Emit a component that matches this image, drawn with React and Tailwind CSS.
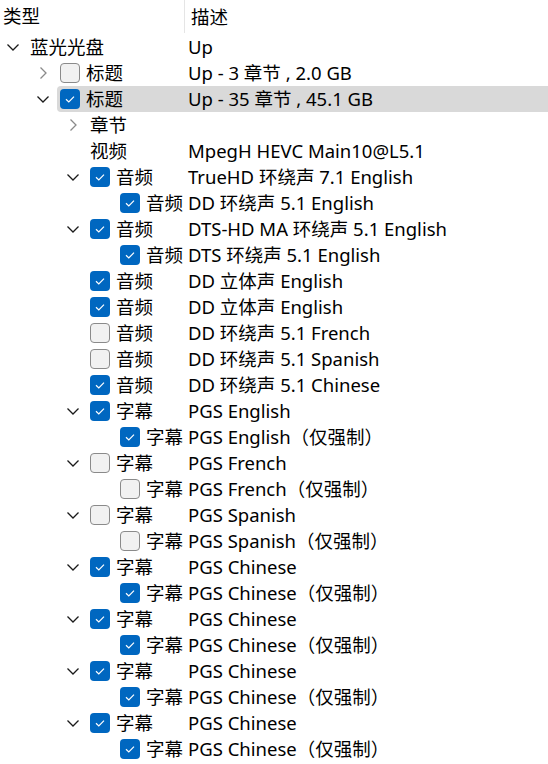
import React from "react";

const rows = [
  { l: 0, ch: "open", cb: null, t: "蓝光光盘", d: "Up" },
  { l: 1, ch: "closed", cb: false, t: "标题", d: "Up - 3 章节 , 2.0 GB" },
  { l: 1, ch: "open", cb: true, t: "标题", d: "Up - 35 章节 , 45.1 GB", sel: true },
  { l: 2, ch: "closed", cb: null, t: "章节", d: "" },
  { l: 2, ch: null, cb: null, t: "视频", d: "MpegH HEVC Main10@L5.1" },
  { l: 2, ch: "open", cb: true, t: "音频", d: "TrueHD 环绕声 7.1 English" },
  { l: 3, ch: null, cb: true, t: "音频", d: "DD 环绕声 5.1 English" },
  { l: 2, ch: "open", cb: true, t: "音频", d: "DTS-HD MA 环绕声 5.1 English" },
  { l: 3, ch: null, cb: true, t: "音频", d: "DTS 环绕声 5.1 English" },
  { l: 2, ch: null, cb: true, t: "音频", d: "DD 立体声 English" },
  { l: 2, ch: null, cb: true, t: "音频", d: "DD 立体声 English" },
  { l: 2, ch: null, cb: false, t: "音频", d: "DD 环绕声 5.1 French" },
  { l: 2, ch: null, cb: false, t: "音频", d: "DD 环绕声 5.1 Spanish" },
  { l: 2, ch: null, cb: true, t: "音频", d: "DD 环绕声 5.1 Chinese" },
  { l: 2, ch: "open", cb: true, t: "字幕", d: "PGS English" },
  { l: 3, ch: null, cb: true, t: "字幕", d: "PGS English（仅强制）" },
  { l: 2, ch: "open", cb: false, t: "字幕", d: "PGS French" },
  { l: 3, ch: null, cb: false, t: "字幕", d: "PGS French（仅强制）" },
  { l: 2, ch: "open", cb: false, t: "字幕", d: "PGS Spanish" },
  { l: 3, ch: null, cb: false, t: "字幕", d: "PGS Spanish（仅强制）" },
  { l: 2, ch: "open", cb: true, t: "字幕", d: "PGS Chinese" },
  { l: 3, ch: null, cb: true, t: "字幕", d: "PGS Chinese（仅强制）" },
  { l: 2, ch: "open", cb: true, t: "字幕", d: "PGS Chinese" },
  { l: 3, ch: null, cb: true, t: "字幕", d: "PGS Chinese（仅强制）" },
  { l: 2, ch: "open", cb: true, t: "字幕", d: "PGS Chinese" },
  { l: 3, ch: null, cb: true, t: "字幕", d: "PGS Chinese（仅强制）" },
  { l: 2, ch: "open", cb: true, t: "字幕", d: "PGS Chinese" },
  { l: 3, ch: null, cb: true, t: "字幕", d: "PGS Chinese（仅强制）" },
];

const indent = ["pl-0", "pl-[30px]", "pl-[60px]", "pl-[90px]"];

function Chevron({ kind }) {
  if (kind === "open") {
    return (
      <svg width="14" height="14" viewBox="0 0 14 14" className="block">
        <path d="M1.5 4.5 L7 10 L12.5 4.5" fill="none" stroke="#1a1a1a" strokeWidth="1.3" />
      </svg>
    );
  }
  if (kind === "closed") {
    return (
      <svg width="14" height="14" viewBox="0 0 14 14" className="block">
        <path d="M4.5 1.5 L10 7 L4.5 12.5" fill="none" stroke="#8a8a8a" strokeWidth="1.3" />
      </svg>
    );
  }
  return null;
}

function Check({ on }) {
  if (on) {
    return (
      <div className="w-[20px] h-[20px] rounded-[4px] bg-[#0067c0] flex items-center justify-center shrink-0">
        <svg width="12" height="12" viewBox="0 0 12 12">
          <path d="M2 6.3 L4.8 9 L10 3.6" fill="none" stroke="#ffffff" strokeWidth="1.2" />
        </svg>
      </div>
    );
  }
  return <div className="w-[20px] h-[20px] rounded-[4px] bg-[#f1f1f1] border border-[#8a8a8a] shrink-0" />;
}

function Row({ r }) {
  return (
    <div className="relative h-[26px] flex items-center">
      {r.sel && <div className="absolute left-[57px] right-0 top-0 bottom-0 bg-[#d9d9d9] rounded-l-[4px]" />}
      <div className="relative flex items-center w-[188px] shrink-0 h-full">
        <div className={`flex items-center h-full ${indent[r.l]}`}>
          <div className="flex items-center w-[30px] h-full pl-[6px] shrink-0">
            <Chevron kind={r.ch} />
          </div>
          <div className="flex items-center whitespace-nowrap">
            {r.cb !== null && <Check on={r.cb} />}
            <span className={r.cb !== null ? "ml-[6px]" : ""}>{r.t}</span>
          </div>
        </div>
      </div>
      <div className="relative whitespace-nowrap">{r.d}</div>
    </div>
  );
}

export default function App() {
  return (
    <div
      className="w-[548px] h-[764px] bg-white text-black text-[18.5px] leading-none overflow-hidden"
      style={{ fontFamily: '"Noto Sans", "Noto Sans CJK SC", sans-serif' }}
    >
      <div className="h-[34px] flex">
        <div className="w-[185px] h-[33px] border-r border-[#e5e5e5] pl-[3px] flex items-center">类型</div>
        <div className="pl-[6px] flex items-center">描述</div>
      </div>
      <div>
        {rows.map((r, i) => (
          <Row key={i} r={r} />
        ))}
      </div>
    </div>
  );
}
